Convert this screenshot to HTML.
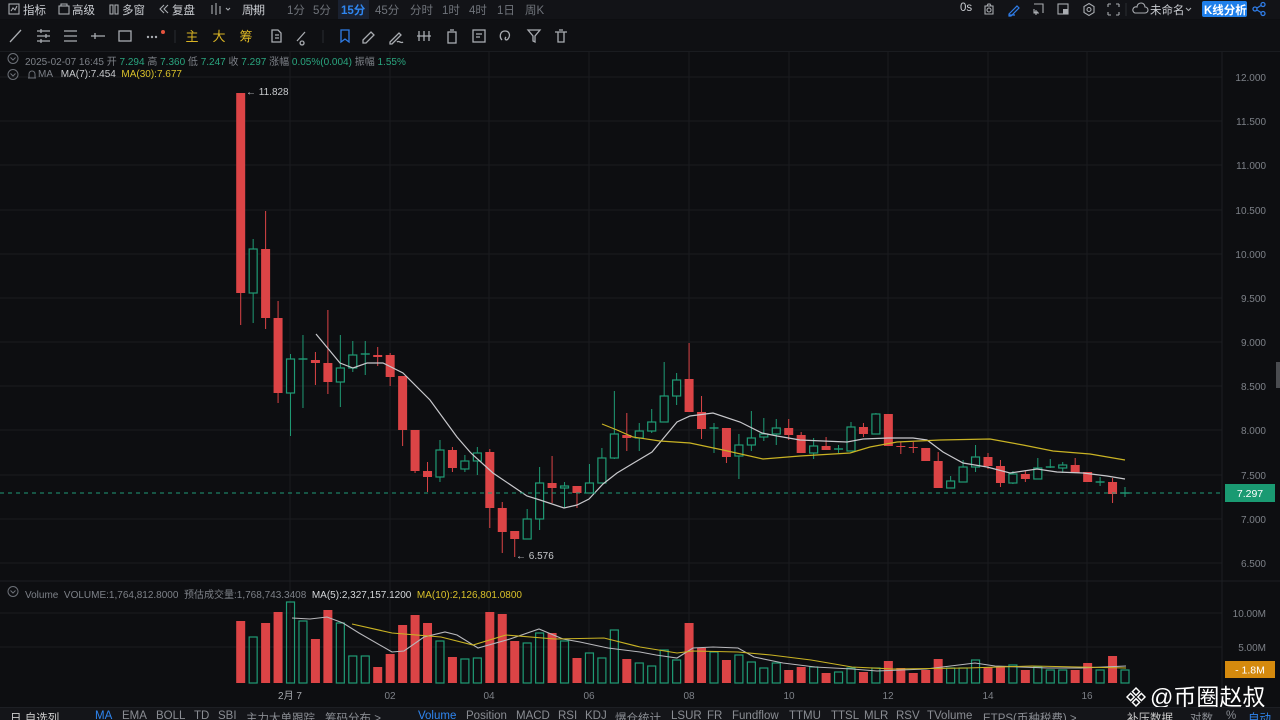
<!DOCTYPE html>
<html><head><meta charset="utf-8"><style>
*{margin:0;padding:0;box-sizing:border-box}
body{width:1280px;height:720px;overflow:hidden;background:#0d0e11;font-family:"Liberation Sans","Noto Sans CJK SC",sans-serif;color:#9a9da3;position:relative}
.a{position:absolute;white-space:nowrap}
#top{position:absolute;left:0;top:0;width:1280px;height:19px;background:#121317}
#tb2{position:absolute;left:0;top:20px;width:1280px;height:32px;background:#0f1013;border-bottom:1px solid #1a1c20}
.t1{font-size:11.5px;color:#c9ccd1;top:2px}
.tf{font-size:11.5px;color:#6f737a;top:2px}
.info{font-size:10px;color:#7d8188}
.g{color:#2aa57f}
#bot{position:absolute;left:0;top:707px;width:1280px;height:13px;background:#141519;border-top:1px solid #1d1f24;overflow:hidden}
#bot span{position:absolute;top:2px;font-size:11.5px;color:#8a8d93;white-space:nowrap}
</style></head><body>
<div id="top"></div>
<div id="tb2"></div>
<svg class="a" style="left:0;top:0" width="1280" height="720">
 <!-- grid -->
 <g stroke="#1a1c20" stroke-width="1">
  <line x1="0" y1="77" x2="1222" y2="77"/><line x1="0" y1="121" x2="1222" y2="121"/><line x1="0" y1="165" x2="1222" y2="165"/><line x1="0" y1="210" x2="1222" y2="210"/><line x1="0" y1="254" x2="1222" y2="254"/><line x1="0" y1="298" x2="1222" y2="298"/><line x1="0" y1="342" x2="1222" y2="342"/><line x1="0" y1="386" x2="1222" y2="386"/><line x1="0" y1="430" x2="1222" y2="430"/><line x1="0" y1="475" x2="1222" y2="475"/><line x1="0" y1="519" x2="1222" y2="519"/><line x1="0" y1="563" x2="1222" y2="563"/>
  <line x1="0" y1="613" x2="1222" y2="613"/><line x1="0" y1="647" x2="1222" y2="647"/>
  <line x1="290" y1="52" x2="290" y2="683"/><line x1="390" y1="52" x2="390" y2="683"/><line x1="489" y1="52" x2="489" y2="683"/><line x1="589" y1="52" x2="589" y2="683"/><line x1="689" y1="52" x2="689" y2="683"/><line x1="789" y1="52" x2="789" y2="683"/><line x1="888" y1="52" x2="888" y2="683"/><line x1="988" y1="52" x2="988" y2="683"/><line x1="1087" y1="52" x2="1087" y2="683"/>
 </g>
 <line x1="0" y1="581" x2="1280" y2="581" stroke="#1d1f24"/>
 <line x1="1222" y1="52" x2="1222" y2="706" stroke="#1d1f24"/>
 <g id="cd"></g><g id="vol"></g>
 <polyline fill="none" stroke="#c8c8cc" stroke-width="1.2" points="316,334 340,363 353,368 367,363 383,363 403,373 430,400 457,437 470,452 473,455 493,473 527,496 540,500 564,508 577,505 589,499 603,484 617,473 652,452 677,422 690,416 713,413 740,422 762,433 777,436 800,440 823,441 847,442 863,439 888,438 913,438 927,440 943,452 963,463 987,467 1010,473 1037,469 1057,472 1083,473 1107,476 1125,479"/>
 <polyline fill="none" stroke="#c9b324" stroke-width="1.2" points="602,424 617,430 633,437 660,441 690,443 723,450 763,459 800,456 850,453 870,447 897,442 940,440 990,439 1023,445 1053,451 1090,454 1125,460"/>
 <polyline fill="none" stroke="#b8b8bc" stroke-width="1.1" points="292,618 310,619 327,617 343,623 359,633 392,652 404,651 424,637 445,632 457,635 478,648 510,639 539,629 563,639 580,642 608,648 640,652 656,655 677,658 693,648 713,647 738,648 754,657 783,663 815,667 852,669 877,671 926,669 975,663 995,666 1048,668 1081,668 1126,666"/>
 <polyline fill="none" stroke="#c9b324" stroke-width="1.1" points="352,624 392,633 441,637 473,645 506,635 555,639 604,638 640,647 677,653 693,651 738,652 771,655 811,660 852,667 893,669 967,668 1032,666 1126,668"/>
 <line x1="0" y1="493" x2="1222" y2="493" stroke="#1f9a78" stroke-dasharray="4,4"/>
 <rect x="1225" y="484" width="50" height="18" fill="#1a9a72"/>
 <text x="1250" y="497" fill="#fff" font-size="10.5" text-anchor="middle" font-family="Liberation Sans">7.297</text>
 <rect x="1225" y="661" width="50" height="17" fill="#d58a0e"/>
 <text x="1250" y="673.5" fill="#fff" font-size="10.5" text-anchor="middle" font-family="Liberation Sans">- 1.8M</text>
 <g fill="#7d8188" font-size="10" font-family="Liberation Sans" text-anchor="end">
  <text x="1266" y="81">12.000</text><text x="1266" y="125">11.500</text><text x="1266" y="169">11.000</text><text x="1266" y="214">10.500</text><text x="1266" y="258">10.000</text><text x="1266" y="302">9.500</text><text x="1266" y="346">9.000</text><text x="1266" y="390">8.500</text><text x="1266" y="434">8.000</text><text x="1266" y="479">7.500</text><text x="1266" y="523">7.000</text><text x="1266" y="567">6.500</text>
  <text x="1266" y="617">10.00M</text><text x="1266" y="651">5.00M</text>
 </g>
 <g fill="#7d8188" font-size="10" font-family="Liberation Sans,Noto Sans CJK SC,sans-serif" text-anchor="middle">
  <text x="290" y="699" fill="#a5a8ad">2月 7</text><text x="390" y="699">02</text><text x="489" y="699">04</text><text x="589" y="699">06</text><text x="689" y="699">08</text><text x="789" y="699">10</text><text x="888" y="699">12</text><text x="988" y="699">14</text><text x="1087" y="699">16</text>
 </g>
 <text x="246" y="95" fill="#c8cacd" font-size="10" font-family="Liberation Sans">← 11.828</text>
 <text x="516" y="559" fill="#c8cacd" font-size="10" font-family="Liberation Sans">← 6.576</text>
 <rect x="1276" y="362" width="4" height="26" fill="#4a4c50"/>
 <!-- toolbar2 icons -->
 <g fill="none" stroke="#a9acb1" stroke-width="1.3">
  <line x1="10" y1="42" x2="21" y2="30"/>
  <path d="M37 31h13M37 36h13M37 41h13M41 29v4M46 34v4M41 39v4"/>
  <path d="M64 31h13M64 36h13M64 41h13"/>
  <path d="M91 36h14M95 33v6"/>
  <rect x="119" y="31" width="12" height="10"/>
  <path d="M272 30h6l3 3v9h-9z M275 35h4 M275 38h4"/>
  <path d="M297 41l8-9 M302 41a2 2 0 1 0 .1 0"/>
  <path d="M363 40l8-8 3 3-8 8-3 0z"/>
  <path d="M390 42l9-9 2 2-9 9h-2z M397 42c2-2 4 2 6 0"/>
  <path d="M419 31v10M424 31v10M429 31v10M417 36h14"/>
  <rect x="448" y="32" width="8" height="11"/><path d="M450 30h4"/>
  <rect x="473" y="30" width="12" height="12"/><path d="M476 34h6M476 37h4"/>
  <path d="M502 40c-3-3-2-9 3-9 4 0 6 4 3 8-2 2-4 0-2-2"/>
  <path d="M528 30h12l-5 6v6l-2-1v-5z"/>
  <path d="M555 32h12M558 32v10h6V32M559 30h4"/>
  <path d="M341 30h8v12l-4-3-4 3z" stroke="#2f7de8"/>
 </g>
 <g fill="#a9acb1"><circle cx="148" cy="37" r="1.2"/><circle cx="152" cy="37" r="1.2"/><circle cx="156" cy="37" r="1.2"/></g>
 <circle cx="163" cy="32" r="2" fill="#e5533d"/>
 <line x1="175" y1="30" x2="175" y2="43" stroke="#2a2c30"/>
 <line x1="323" y1="30" x2="323" y2="43" stroke="#2a2c30"/>
 <g font-size="13" fill="#d9b424" font-family="Noto Sans CJK SC,sans-serif" text-anchor="middle"><text x="192" y="41">主</text><text x="219" y="41">大</text><text x="246" y="41">筹</text></g>
 <!-- top bar icons -->
 <g fill="none" stroke="#a9acb1" stroke-width="1.1">
  <rect x="9" y="4" width="10" height="10"/><path d="M11 11l2-3 2 2 2-4"/>
  <rect x="59" y="6" width="10" height="8"/><path d="M61 6v-2h6v2"/>
  <path d="M110 5h3v9h-3z M115 5h3v9h-3z"/>
  <path d="M164 5l-4 4 4 4 M168 5l-4 4 4 4"/>
  <path d="M212 5v9M216 3v12M220 6v8M226 8l2 2 2-2"/>
  <path d="M252 8l2 2 2-2" />
  <path d="M985 6h8v8h-8zM987 6l1-2h2l1 2"/><circle cx="989" cy="10" r="2"/>
  <path d="M1034 4h9v9M1039 13h-5v-4M1036 10v5M1034 12h4"/>
  <rect x="1058" y="4" width="10" height="10"/>
  <path d="M1089 3.5l5 3v6l-5 3-5-3v-6z"/><circle cx="1089" cy="9.5" r="2"/>
  <path d="M1108 4h3M1108 4v3M1119 4h-3M1119 4v3M1108 15h3M1108 15v-3M1119 15h-3M1119 15v-3"/>
  <path d="M1135 13h10a3 3 0 0 0 0-6 4 4 0 0 0-8 0 3 3 0 0 0-2 6z"/>
  <path d="M1186 8l2.5 2.5 2.5-2.5"/>
 </g>
 <path d="M1009 14l8-8 2 2-8 8h-2zM1009 15h6" stroke="#2f7de8" fill="none" stroke-width="1.2"/>
 <line x1="1126" y1="3" x2="1126" y2="16" stroke="#2a2c30"/>
 <rect x="1063" y="9" width="5" height="5" fill="#a9acb1"/>
 <rect x="1202" y="1" width="45" height="16" rx="2" fill="#1f7fea"/>
 <g stroke="#2f7de8" fill="none" stroke-width="1.3"><circle cx="1255" cy="9" r="2"/><circle cx="1263" cy="4.5" r="2"/><circle cx="1263" cy="13.5" r="2"/><path d="M1257 8l4-2.5M1257 10l4 2.5"/></g>
 <rect x="338" y="0" width="31" height="19" fill="#1a2130"/>
 <!-- info circles -->
 <g fill="none" stroke="#6c7077" stroke-width="1"><circle cx="13" cy="58.5" r="5"/><path d="M10.5 57.5l2.5 2.5 2.5-2.5"/><circle cx="13" cy="74.5" r="5"/><path d="M10.5 73.5l2.5 2.5 2.5-2.5"/><circle cx="13" cy="591.5" r="5"/><path d="M10.5 590.5l2.5 2.5 2.5-2.5"/><path d="M28 78h8M29 78v-4a3 3 0 0 1 6 0v4"/></g>
 <!-- watermark -->
 <g fill="#fff" transform="translate(1136,697)"><path d="M0 -10l4 4-4 4-4-4z M0 2l4 4-4 4-4-4z M-6 -4l4 4-4 4-4-4z M6 -4l4 4-4 4-4-4z" fill="none" stroke="#fff" stroke-width="1.6" transform="scale(0.9)"/></g>
 <text x="1150" y="705" fill="#fff" font-size="23" font-family="Liberation Sans,Noto Sans CJK SC,sans-serif">@币圈赵叔</text>
</svg>
<!-- top bar text -->
<div class="a t1" style="left:23px">指标</div>
<div class="a t1" style="left:72px">高级</div>
<div class="a t1" style="left:122px">多窗</div>
<div class="a t1" style="left:172px">复盘</div>
<div class="a t1" style="left:242px">周期</div>
<div class="a tf" style="left:287px">1分</div>
<div class="a tf" style="left:313px">5分</div>
<div class="a" style="left:341px;top:2px;font-size:11.5px;color:#2f86f0;font-weight:bold">15分</div>
<div class="a tf" style="left:375px">45分</div>
<div class="a tf" style="left:410px">分时</div>
<div class="a tf" style="left:442px">1时</div>
<div class="a tf" style="left:469px">4时</div>
<div class="a tf" style="left:497px">1日</div>
<div class="a tf" style="left:525px">周K</div>
<div class="a t1" style="left:960px">0s</div>
<div class="a t1" style="left:1150px">未命名</div>
<div class="a" style="left:1204px;top:2px;font-size:11.5px;color:#fff;font-weight:bold">K线分析</div>
<!-- info -->
<div class="a info" style="left:25px;top:53px">2025-02-07 16:45 开 <span class="g">7.294</span> 高 <span class="g">7.360</span> 低 <span class="g">7.247</span> 收 <span class="g">7.297</span> 涨幅 <span class="g">0.05%(0.004)</span> 振幅 <span class="g">1.55%</span></div>
<div class="a info" style="left:38px;top:69px">MA &nbsp; <span style="color:#c8cacd">MA(7):7.454</span> &nbsp;<span style="color:#d9c12a">MA(30):7.677</span></div>
<div class="a info" style="left:25px;top:586px">Volume &nbsp;VOLUME:1,764,812.8000 &nbsp;预估成交量:1,768,743.3408 &nbsp;<span style="color:#d5d7da">MA(5):2,327,157.1200</span> &nbsp;<span style="color:#d9c12a">MA(10):2,126,801.0800</span></div>
<div id="bot">
<span style="left:10px;color:#ccc">日 自选列</span>
<span style="left:95px;color:#2f86f0">MA</span><span style="left:122px">EMA</span><span style="left:156px">BOLL</span><span style="left:194px">TD</span><span style="left:218px">SBI</span><span style="left:246px">主力大单跟踪</span><span style="left:325px">筹码分布 &gt;</span>
<span style="left:418px;color:#2f86f0">Volume</span><span style="left:466px">Position</span><span style="left:516px">MACD</span><span style="left:558px">RSI</span><span style="left:585px">KDJ</span><span style="left:615px">爆仓统计</span><span style="left:671px">LSUR</span><span style="left:707px">FR</span><span style="left:732px">Fundflow</span><span style="left:789px">TTMU</span><span style="left:831px">TTSL</span><span style="left:864px">MLR</span><span style="left:896px">RSV</span><span style="left:927px">TVolume</span><span style="left:983px">ETPS(币种税费) &gt;</span>
<span style="left:1127px;color:#ccc">补压数据</span><span style="left:1190px">对数</span><span style="left:1226px">%</span><span style="left:1248px;color:#2f86f0">自动</span>
</div>
<script>
var C=[["r",93,293,93,325],["g",249,293,239,323],["r",249,318,211,329],["r",318,393,301,403],["g",359,393,354,436],["g",359,360,335,408],["r",360,363,352,385],["r",363,382,310,394],["g",368,382,335,407],["g",355,368,341,372],["g",354,355,341,375],["r",355,357,347,366],["r",355,377,353,386],["r",376,430,376,446],["r",430,471,430,473],["r",471,477,462,492],["g",450,477,440,482],["r",450,468,447,472],["g",461,469,455,472],["g",453,461,447,475],["r",452,508,449,528],["r",508,532,502,553],["r",531,539,531,557],["g",519,539,509,539],["g",483,519,467,530],["r",483,488,456,503],["g",486,488,482,508],["r",486,493,486,508],["g",483,493,464,493],["g",458,483,448,483],["g",434,458,391,459],["r",435,438,413,451],["g",431,438,423,451],["g",422,431,409,433],["g",396,422,362,422],["g",380,396,373,405],["r",379,412,343,412],["r",412,429,396,439],["g",428,429,423,453],["r",428,457,428,463],["g",445,456,434,479],["g",438,445,411,451],["g",434,437,418,441],["g",428,434,419,445],["r",428,435,419,440],["r",435,453,432,453],["g",446,453,438,459],["r",446,450,437,450],["g",449,450,445,453],["g",427,451,422,451],["r",427,434,423,437],["g",414,434,413,434],["r",414,446,414,446],["r",446,447,442,454],["r",447,448,442,453],["r",448,461,448,461],["r",461,488,452,488],["g",481,488,476,488],["g",467,482,460,482],["g",457,467,445,472],["r",457,466,453,469],["r",466,483,460,487],["g",474,483,471,484],["r",474,479,471,482],["g",468,479,458,479],["g",467,468,459,468],["g",465,468,462,473],["r",465,473,458,473],["r",472,482,472,482],["g",482,483,477,486],["r",482,494,478,503],["g",493,494,487,497]];
var V=[621,637,623,612,602,621,639,610,623,656,656,667,654,625,615,623,641,657,659,658,612,614,641,643,633,633,641,658,653,658,630,659,663,666,650,660,623,648,652,660,655,662,668,663,670,667,667,673,672,668,672,668,661,668,673,670,659,668,668,660,667,667,665,670,667,670,670,670,663,670,656,670];
var R="#dc4446",G="#1f9b75",s="",v="";
C.forEach(function(c,i){var x=240.7+i*12.455,col=c[0]=="r"?R:G,h=Math.max(c[2]-c[1],1);
s+='<line x1="'+x+'" y1="'+c[3]+'" x2="'+x+'" y2="'+c[4]+'" stroke="'+col+'" stroke-width="1"/>';
if(c[0]=="r")s+='<rect x="'+(x-4.5)+'" y="'+c[1]+'" width="9" height="'+h+'" fill="'+R+'"/>';
else if(h<=1.5)s+='<line x1="'+(x-4.5)+'" y1="'+c[1]+'" x2="'+(x+4.5)+'" y2="'+c[1]+'" stroke="'+G+'" stroke-width="1.4"/>';
else s+='<rect x="'+(x-4)+'" y="'+c[1]+'" width="8" height="'+h+'" fill="#0d0e11" stroke="'+G+'" stroke-width="1.2"/>';
var t=V[i];
if(c[0]=="r")v+='<rect x="'+(x-4.5)+'" y="'+t+'" width="9" height="'+(683-t)+'" fill="'+R+'"/>';
else v+='<rect x="'+(x-4)+'" y="'+t+'" width="8" height="'+(683-t)+'" fill="none" stroke="'+G+'" stroke-width="1.2"/>';});
document.getElementById("cd").innerHTML=s;document.getElementById("vol").innerHTML=v;
</script>
</body></html>
